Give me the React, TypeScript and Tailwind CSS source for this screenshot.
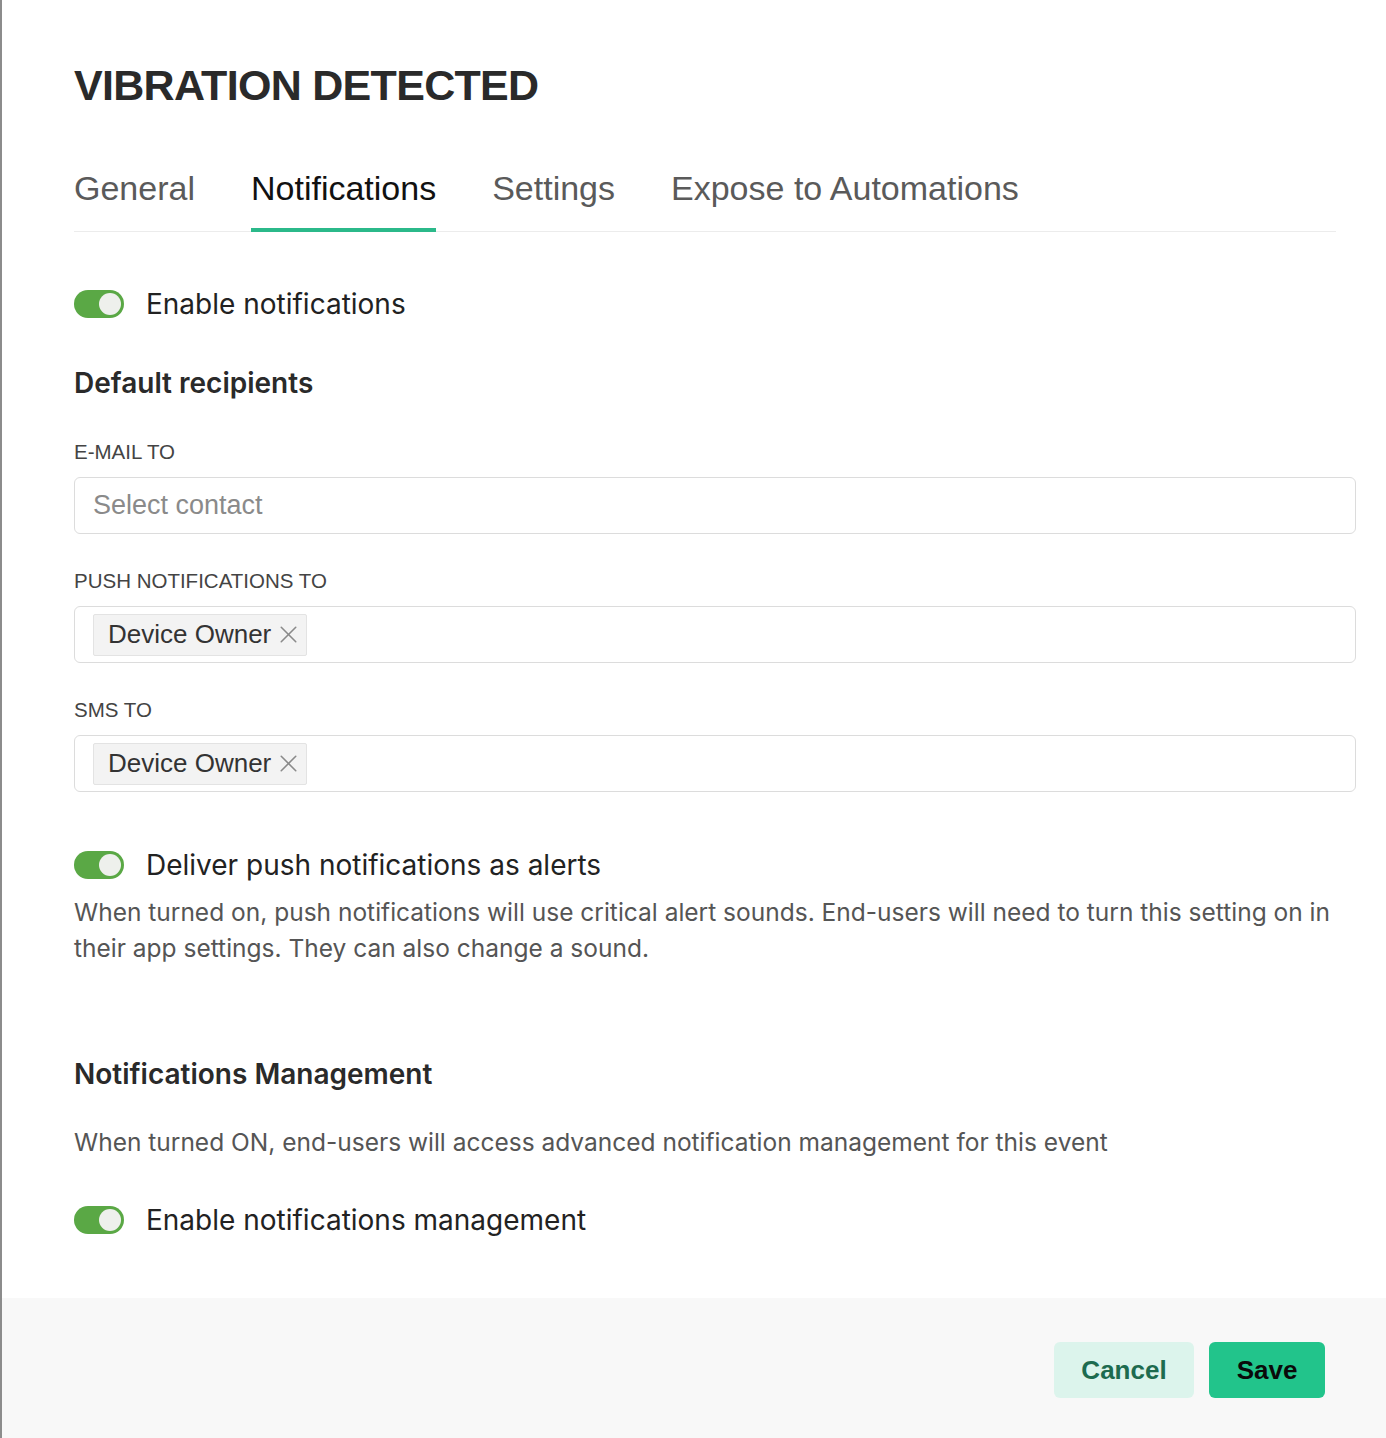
import { X } from 'lucide-react'

const helv = "font-['Liberation_Sans',Arial,sans-serif]"
const inter = "font-['Inter','Noto_Sans',sans-serif]"

function Toggle() {
  return (
    <span className="relative inline-block h-[28px] w-[50px] shrink-0 rounded-full bg-[#5aa845]">
      <span className="absolute right-[3px] top-[3px] h-[22px] w-[22px] rounded-full bg-[#eef0ec]" />
    </span>
  )
}

function ToggleRow({ label, className = '' }: { label: string; className?: string }) {
  return (
    <div className={`flex h-[28px] items-center gap-[22px] ${className}`}>
      <Toggle />
      <span className={`${inter} text-[28px] leading-[36px] text-[#222]`}>{label}</span>
    </div>
  )
}

function Chip({ label }: { label: string }) {
  return (
    <span className="flex h-[42px] items-center gap-[3px] rounded-[2px] border border-[#e3e3e3] bg-[#f3f3f3] pl-[14px] pr-[3px]">
      <span className={`${helv} text-[26px] text-[#333]`}>{label}</span>
      <X className="h-[29px] w-[29px] text-[#8a8a8a]" strokeWidth={1.3} />
    </span>
  )
}

function Field({ label, className = '', children }: { label: string; className?: string; children: React.ReactNode }) {
  return (
    <div className={className}>
      <div className={`${helv} h-[24px] text-[20.5px] leading-[24px] text-[#444]`}>{label}</div>
      <div className="mt-[13px] flex h-[57px] items-center rounded-[6px] border border-[#dcdcdc] bg-white px-[18px]">
        {children}
      </div>
    </div>
  )
}

const tabs = ['General', 'Notifications', 'Settings', 'Expose to Automations']

export default function App() {
  return (
    <div className="flex h-[1438px] w-[1386px] bg-white">
      <div className="w-[2px] shrink-0 bg-[#8c8c8c]" />
      <div className="flex flex-1 flex-col">
        <div className="flex-1 pl-[72px] pr-[30px] pt-[63px]">
          <h1 className={`${helv} text-[43px] font-bold leading-[44px] tracking-[-0.7px] text-[#2a2a2a]`}>
            VIBRATION DETECTED
          </h1>

          <div className="mr-[20px] mt-[61px] flex gap-[56px] border-b border-[#ececec]">
            {tabs.map((t) => {
              const active = t === 'Notifications'
              return (
                <div
                  key={t}
                  className={`${helv} -mb-px pb-[20px] text-[34px] leading-[40px] ${
                    active ? 'border-b-[4px] border-[#2bb98a] text-[#111]' : 'border-b-[4px] border-transparent text-[#5a5a5a]'
                  }`}
                >
                  {t}
                </div>
              )
            })}
          </div>

          <ToggleRow label="Enable notifications" className="mt-[58px]" />

          <h2 className={`${inter} mt-[47px] text-[28px] font-semibold leading-[36px] text-[#2a2a2a]`}>
            Default recipients
          </h2>

          <Field label="E-MAIL TO" className="mt-[39px]">
            <span className={`${helv} text-[27px] text-[#8a8a8a]`}>Select contact</span>
          </Field>
          <Field label="PUSH NOTIFICATIONS TO" className="mt-[35px]">
            <Chip label="Device Owner" />
          </Field>
          <Field label="SMS TO" className="mt-[35px]">
            <Chip label="Device Owner" />
          </Field>

          <ToggleRow label="Deliver push notifications as alerts" className="mt-[59px]" />
          <p className={`${inter} mt-[15px] text-[24.5px] leading-[36px] text-[#555]`}>
            When turned on, push notifications will use critical alert sounds. End-users will need to turn this setting on in
            their app settings. They can also change a sound.
          </p>

          <h2 className={`${inter} mt-[90px] text-[28px] font-semibold leading-[36px] text-[#2a2a2a]`}>
            Notifications Management
          </h2>
          <p className={`${inter} mt-[32px] text-[24.5px] leading-[36px] text-[#555]`}>
            When turned ON, end-users will access advanced notification management for this event
          </p>

          <ToggleRow label="Enable notifications management" className="mt-[46px]" />
        </div>

        <div className="flex h-[140px] shrink-0 items-start justify-end gap-[15px] bg-[#f8f8f8] pr-[61px] pt-[44px]">
          <button className={`${helv} h-[56px] w-[140px] rounded-[6px] bg-[#dcf4ec] text-[26px] font-bold text-[#1d6b4f]`}>
            Cancel
          </button>
          <button className={`${helv} h-[56px] w-[116px] rounded-[6px] bg-[#22c48b] text-[26px] font-bold text-[#0a0a0a]`}>
            Save
          </button>
        </div>
      </div>
    </div>
  )
}
